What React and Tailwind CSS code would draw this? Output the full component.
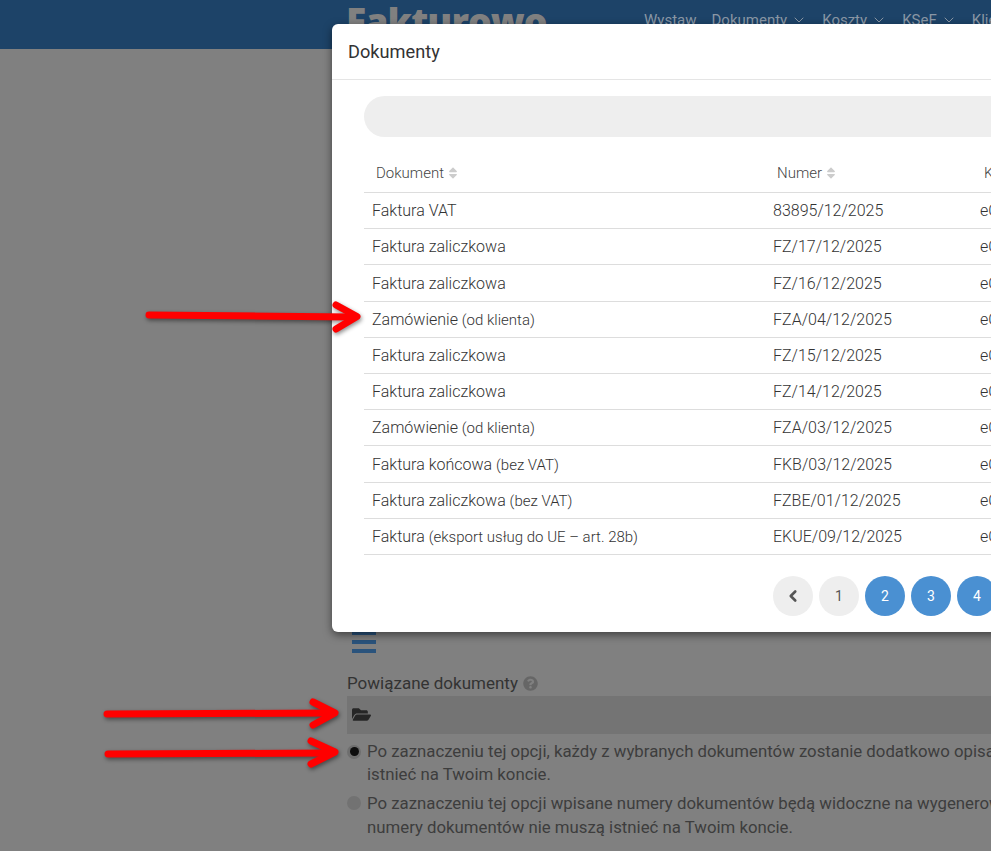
import { ChevronDown, ChevronLeft } from 'lucide-react';
import { FaFolderOpen, FaQuestionCircle, FaSort } from 'react-icons/fa';

const rows = [
  ['Faktura VAT', '', '83895/12/2025'],
  ['Faktura zaliczkowa', '', 'FZ/17/12/2025'],
  ['Faktura zaliczkowa', '', 'FZ/16/12/2025'],
  ['Zamówienie', '(od klienta)', 'FZA/04/12/2025'],
  ['Faktura zaliczkowa', '', 'FZ/15/12/2025'],
  ['Faktura zaliczkowa', '', 'FZ/14/12/2025'],
  ['Zamówienie', '(od klienta)', 'FZA/03/12/2025'],
  ['Faktura końcowa', '(bez VAT)', 'FKB/03/12/2025'],
  ['Faktura zaliczkowa', '(bez VAT)', 'FZBE/01/12/2025'],
  ['Faktura', '(eksport usług do UE – art. 28b)', 'EKUE/09/12/2025'],
];

function NavItem({ label, arrow }) {
  return (
    <div className="flex shrink-0 items-center gap-[4px] whitespace-nowrap">
      {label}
      {arrow && <ChevronDown size={16} strokeWidth={1.5} />}
    </div>
  );
}

function Arrow({ line, head }) {
  return (
    <>
      <path d={line} />
      <path d={head} />
    </>
  );
}

function PageButton({ active, children }) {
  return (
    <div
      className={`flex h-10 w-10 shrink-0 items-center justify-center rounded-full text-sm ${
        active ? 'bg-[#4a90d2] text-white' : 'bg-[#eeeeee] text-[#555555]'
      }`}
    >
      {children}
    </div>
  );
}

export default function App() {
  return (
    <div className="relative h-[851px] w-full overflow-hidden bg-[#808080] font-['Roboto',sans-serif]">
      {/* dimmed page behind the dialog */}
      <header className="flex h-[49px] items-start overflow-hidden bg-[#1d4368] pl-[346px]">
        <div className="w-[298px] shrink-0 pt-[1px] font-['Open_Sans',sans-serif] text-[37.3px] leading-[40px] font-extrabold tracking-tight text-[#808080]">
          Fakturowo
        </div>
        <div className="flex shrink-0 gap-[15px] pt-3 text-[15px] leading-4 text-[#8a97a5]">
          <NavItem label="Wystaw" />
          <NavItem label="Dokumenty" arrow />
          <NavItem label="Koszty" arrow />
          <NavItem label="KSeF" arrow />
          <NavItem label="Klienci" />
        </div>
      </header>

      <main className="pt-[582px] pl-[347px]">
        <div className="ml-[5px] flex w-6 flex-col gap-[5.5px]">
          <div className="h-[3.5px] bg-[#2a537c]" />
          <div className="h-[3.5px] bg-[#2a537c]" />
          <div className="h-[3.5px] bg-[#2a537c]" />
        </div>
        <div className="mt-[19px] flex h-6 items-center gap-[5px] text-[17px] text-[#333333]">
          Powiązane dokumenty
          <FaQuestionCircle size={15} className="text-[#666666]" />
        </div>
        <div className="flex h-[38px] w-[700px] items-center bg-[#747474] pl-[5px] text-[#262626]">
          <FaFolderOpen size={19} />
        </div>
        <div className="mt-[6px] flex w-[760px] gap-[6px] text-[16.8px] leading-[23.5px] text-[#3d3d3d]">
          <div className="mt-[5px] flex h-[14px] w-[14px] shrink-0 items-center justify-center rounded-full bg-[#6e6e6e]">
            <div className="h-[9px] w-[9px] rounded-full bg-[#0d0d0d]" />
          </div>
          <div>
            <div className="whitespace-nowrap">
              Po zaznaczeniu tej opcji, każdy z wybranych dokumentów zostanie dodatkowo opisany na fakturze
            </div>
            <div>istnieć na Twoim koncie.</div>
          </div>
        </div>
        <div className="mt-[4px] flex w-[760px] gap-[6px] text-[16.8px] leading-6 text-[#3d3d3d]">
          <div className="mt-[5px] h-[14px] w-[14px] shrink-0 rounded-full bg-[#727272]" />
          <div>
            <div className="whitespace-nowrap">
              Po zaznaczeniu tej opcji wpisane numery dokumentów będą widoczne na wygenerowanym dokumencie
            </div>
            <div>numery dokumentów nie muszą istnieć na Twoim koncie.</div>
          </div>
        </div>
      </main>

      {/* dialog */}
      <section className="absolute top-6 left-[332px] h-[608px] w-[800px] rounded-md bg-white shadow-[0_3px_9px_rgba(0,0,0,0.5)]">
        <div className="flex h-14 items-center border-b border-[#e5e5e5] pl-4 text-[18.2px] leading-6 font-normal text-[#333333]">
          Dokumenty
        </div>
        <div className="pt-4 pl-8">
          <div className="h-[41px] w-full rounded-full bg-[#eeeeee]" />
          <table className="mt-3 w-[768px] table-fixed border-collapse text-base font-light text-[#333333]">
            <thead>
              <tr className="h-[43px] border-b border-[#dddddd] text-left text-[15px] text-[#444444]">
                <th className="w-[401px] pt-[5px] pl-3 font-light">
                  <div className="flex items-center gap-[2px]">Dokument <FaSort size={14} className="text-[#cccccc]" /></div>
                </th>
                <th className="w-[207px] pt-[5px] pl-3 font-light">
                  <div className="flex items-center gap-[2px]">Numer <FaSort size={14} className="text-[#cccccc]" /></div>
                </th>
                <th className="pt-[5px] pl-3 font-light">Kontrahent</th>
              </tr>
            </thead>
            <tbody>
              {rows.map((row, i) => (
                <tr key={i} className={`border-b border-[#dddddd] ${i === 2 || i === 7 ? 'h-[37px] [&>td]:pt-[2px]' : 'h-9 [&>td]:pt-[1px]'}`}>
                  <td className="pl-2">
                    {row[0]} {row[1] && <span className="text-[15px]">{row[1]}</span>}
                  </td>
                  <td className="pl-2">{row[2]}</td>
                  <td className="pl-2">eCommerce</td>
                </tr>
              ))}
            </tbody>
          </table>
          <div className="mt-[21px] ml-[409px] flex gap-1.5">
            <PageButton><ChevronLeft size={18} strokeWidth={3.5} /></PageButton>
            <PageButton>1</PageButton>
            <PageButton active>2</PageButton>
            <PageButton active>3</PageButton>
            <PageButton active>4</PageButton>
          </div>
        </div>
      </section>

      {/* red annotation arrows */}
      <svg
        className="absolute inset-0 h-[851px] w-[991px] drop-shadow-[1px_2px_2px_rgba(0,0,0,0.45)]"
        viewBox="0 0 991 851"
        fill="none"
        stroke="#ff0000"
        strokeWidth="7"
        strokeLinecap="round"
        strokeLinejoin="round"
      >
        <Arrow line="M149 315 L354 317" head="M336 305 L357 316.5 L336 329" />
        <Arrow line="M107 714 L332 713" head="M313 702 L335 713 L313 725" />
        <Arrow line="M108 754 L332 753" head="M311 741 L335 752 L311 764" />
      </svg>
    </div>
  );
}
